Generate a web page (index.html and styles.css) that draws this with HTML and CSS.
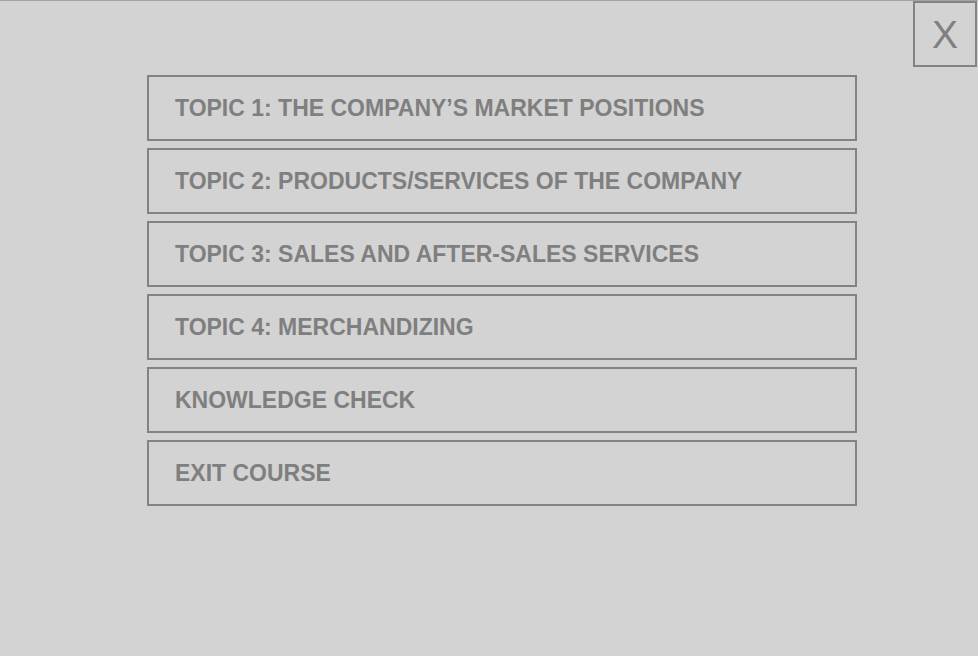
FILE: index.html
```
<!DOCTYPE html>
<html lang="en">
<head>
    <meta charset="UTF-8">
    <meta name="viewport" content="width=device-width, initial-scale=1.0">
    <title>Course Menu</title>
    <link rel="stylesheet" href="styles.css">
</head>
<body>
    <div class="topbar">
        <button class="close-btn" type="button">X</button>
    </div>
    <nav class="menu">
        <a class="menu-item" href="#">TOPIC 1: THE COMPANY’S MARKET POSITIONS</a>
        <a class="menu-item" href="#">TOPIC 2: PRODUCTS/SERVICES OF THE COMPANY</a>
        <a class="menu-item" href="#">TOPIC 3: SALES AND AFTER-SALES SERVICES</a>
        <a class="menu-item" href="#">TOPIC 4: MERCHANDIZING</a>
        <a class="menu-item" href="#">KNOWLEDGE CHECK</a>
        <a class="menu-item" href="#">EXIT COURSE</a>
    </nav>
</body>
</html>
```

FILE: styles.css
```
body {
    margin: 0;
    padding: 0;
    min-height: 656px;
    background-color: #d3d3d3;
    border-top: 1px solid #a3a3a3;
    font-family: "Liberation Sans", Arial, sans-serif;
    overflow: hidden;
}
.topbar {
    display: flex;
    justify-content: flex-end;
    padding-right: 1px;
}
.close-btn {
    width: 64px;
    height: 66px;
    margin: 0;
    padding: 0;
    background: transparent;
    border: 2px solid #838383;
    color: #808080;
    font-family: "Liberation Sans", Arial, sans-serif;
    font-size: 39px;
    font-weight: normal;
    line-height: 1;
}
.menu {
    display: flex;
    flex-direction: column;
    gap: 7px;
    width: 710px;
    margin: 8px 0 0 147px;
}
.menu-item {
    display: flex;
    align-items: center;
    box-sizing: border-box;
    height: 66px;
    padding: 0 26px;
    border: 2px solid #838383;
    color: #7f7f7f;
    font-size: 23px;
    font-weight: bold;
    text-decoration: none;
}
```
